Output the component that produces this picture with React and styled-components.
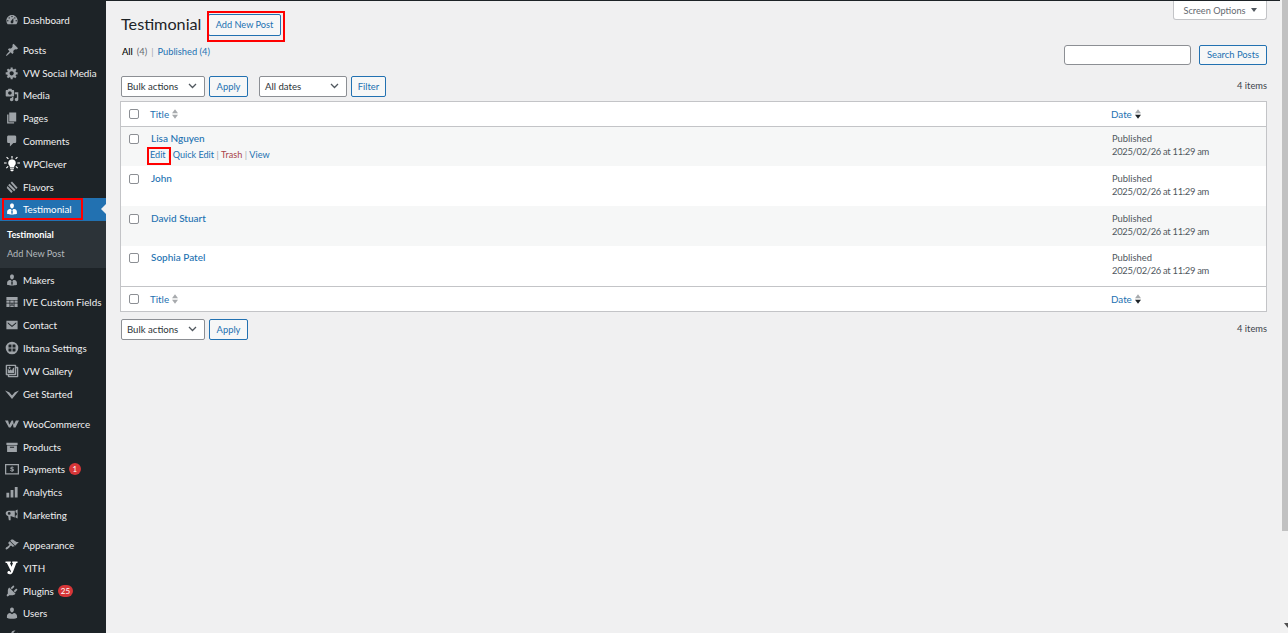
import React from "react";
import styled, { createGlobalStyle } from "styled-components";

const Global = createGlobalStyle`
  html, body { margin: 0; padding: 0; height: 100%; overflow: hidden; background: #f0f0f1; }
  #root { height: 100%; }
  * { box-sizing: border-box; }
  body { font-family: "Lato", "Liberation Sans", sans-serif; font-size: 10px; color: #3c434a; }
`;

const Page = styled.div`
  display: flex; height: 633px; width: 1288px;
`;
const Column = styled.div`
  flex: 1; min-width: 0; display: flex; flex-direction: column;
`;
const TopStrip = styled.div`
  height: 1px; background: #1d2327; flex: none;
`;
const Body = styled.div`
  display: flex; flex: 1; min-height: 0;
`;
const Sidebar = styled.nav`
  width: 106px; flex: none; background: #1d2327; padding-top: 7.2px; overflow: hidden;
  display: flex; flex-direction: column;
`;
const MenuRow = styled.div`
  position: relative; flex: none; height: 22.8px; display: flex; align-items: center;
  padding-left: 3px; gap: 3px; color: ${p => (p.$active ? "#fff" : "#f0f0f1")};
  background: ${p => (p.$active ? "#2271b1" : "transparent")};
  font-size: 9.8px; white-space: nowrap;
`;
const IconSlot = styled.span`
  width: 17px; height: 17px; flex: none; display: flex; align-items: center; justify-content: center;
  color: ${p => (p.$white ? "#fff" : "#9ea3a8")};
  svg { display: block; flex: none; fill: currentColor; }
`;
const Gap = styled.div`
  height: 7.4px; flex: none;
`;
const Arrow = styled.span`
  position: absolute; right: 0; top: 6px; width: 0; height: 0;
  border: 5px solid transparent; border-right-color: #f0f0f1; border-left: 0;
`;
const RedMark = styled.span`
  position: absolute; border: 2px solid #f00; pointer-events: none;
  left: ${p => p.$l}px; top: ${p => p.$t}px; width: ${p => p.$w}px; height: ${p => p.$h}px;
`;
const Badge = styled.span`
  display: inline-flex; align-items: center; justify-content: center; height: 12px; min-width: 12px;
  padding: 0 3px; border-radius: 6px; background: #d63638; color: #fff; font-size: 8px; margin-left: 1px;
`;
const Submenu = styled.div`
  flex: none; height: 47.4px; background: #2c3338; padding: 4px 0 0 7px;
`;
const SubItem = styled.div`
  height: 19px; line-height: 19px; font-size: 9.2px;
  color: ${p => (p.$on ? "#fff" : "#b4b9be")}; font-weight: ${p => (p.$on ? 700 : 400)};
`;
const Main = styled.main`
  flex: 1; min-width: 0; padding: 0 13px 0 14px; display: flex; flex-direction: column;
`;
const Scrollbar = styled.div`
  width: 8px; flex: none; background: #f1f1f1; display: flex; flex-direction: column; align-items: flex-end;
`;
const Thumb = styled.div`
  width: 6px; height: 531px; background: #c1c1c1;
`;
const ScrollArrow = styled.div`
  margin-top: auto; margin-bottom: 5px; width: 0; height: 0;
  border-top: 5px solid #505050; border-left: 4px solid transparent; border-right: 0 solid transparent;
`;
const TopRow = styled.div`
  display: flex; justify-content: space-between; align-items: flex-start; height: 44px;
`;
const TitleGroup = styled.div`
  display: flex; align-items: center; gap: 7px; padding: 13px 0 0 1px;
  position: relative;
`;
const Heading = styled.h1`
  margin: 0 0 3px; font-size: 16.2px; font-weight: 400; color: #1d2327; line-height: 19px; width: 80px; white-space: nowrap;
`;
const OutlineBtn = styled.button`
  font: inherit; font-size: ${p => p.$fs || 9.4}px; height: ${p => p.$h || 21}px; width: ${p => p.$w}px; padding: 0;
  background: #f6f7f7; color: #2271b1; border: 1px solid #2271b1; border-radius: 2px;
  line-height: 1; white-space: nowrap; flex: none;
`;
const ScreenTab = styled.div`
  width: 94px; height: 19px; background: #fff; border: 1px solid #c3c4c7; border-top: 0;
  border-radius: 0 0 3px 3px; display: flex; align-items: center; justify-content: center; gap: 5px;
  font-size: 9.2px; color: #646970;
`;
const Caret = styled.span`
  width: 0; height: 0; border: 3px solid transparent; border-top: 4px solid #50575e; border-bottom: 0;
`;
const SearchRow = styled.div`
  display: flex; justify-content: space-between; align-items: flex-start; height: 20px;
`;
const Views = styled.div`
  display: flex; gap: 4px; font-size: 9.3px; padding: 1px 0 0 2px; line-height: 12px; color: #646970;
`;
const ViewAll = styled.span`
  color: #000; font-weight: 500;
`;
const Sep = styled.span`
  color: #a7aaad;
`;
const LinkText = styled.a`
  color: ${p => (p.$danger ? "#a9444a" : "#2271b1")};
`;
const SearchBox = styled.div`
  display: flex; gap: 8px;
`;
const SearchInput = styled.div`
  width: 127px; height: 20px; background: #fff; border: 1px solid #8c8f94; border-radius: 3px;
`;
const NavRow = styled.div`
  display: flex; align-items: center; height: 21px; margin-top: ${p => p.$mt}px; padding-left: 1px;
`;
const Select = styled.div`
  width: ${p => p.$w}px; height: 21px; background: #fff; border: 1px solid #8c8f94; border-radius: 2px;
  display: flex; align-items: center; justify-content: space-between; padding: 0 7px 1px 5px;
  font-size: 9.6px; color: #2c3338; margin-left: ${p => p.$ml || 0}px;
`;
const Chevron = styled.svg`
  width: 9px; height: 6px; fill: none; stroke: #50575e; stroke-width: 1.3;
`;
const Count = styled.span`
  margin-left: auto; font-size: 9.3px; color: #3c434a;
  position: relative; top: -1px;
`;
const NavBtn = styled(OutlineBtn)`
  margin-left: 4px;
`;
const Table = styled.div`
  margin-top: 4px; background: #fff; border: 1px solid #c3c4c7;
`;
const HeadRow = styled.div`
  display: flex; align-items: center; height: 25px; background: #fff; padding-bottom: 1px;
  ${p => (p.$top ? "border-top: 1px solid #c3c4c7;" : "border-bottom: 1px solid #c3c4c7;")}
`;
const CheckCell = styled.div`
  width: 29px; flex: none; display: flex; justify-content: center; padding-right: 4px;
  align-self: ${p => (p.$pad ? "flex-start" : "center")}; padding-top: ${p => p.$pad || 0}px;
`;
const Check = styled.span`
  display: block; width: 10px; height: 10px; background: #fff; border: 1px solid #8c8f94; border-radius: 2px;
`;
const TitleHead = styled.div`
  flex: 1; display: flex; align-items: center; gap: 3px; font-size: 9.8px; color: #2271b1;
`;
const DateHead = styled(TitleHead)`
  flex: none; width: 155px;
`;
const Sort = styled.svg`
  width: 6px; height: 10px; display: block;
`;
const Row = styled.div`
  display: flex; height: ${p => p.$h}px; background: ${p => (p.$alt ? "#f6f7f7" : "#fff")};
`;
const NameCell = styled.div`
  flex: 1; padding: ${p => p.$pad}px 0 0 1px; position: relative;
`;
const Name = styled(LinkText)`
  display: block; font-size: 10px; line-height: 14px; font-weight: 500;
`;
const Actions = styled.div`
  display: flex; gap: 2.4px; font-size: 9.1px; margin: 3px 0 0 -1px; line-height: 13px; color: #a7aaad;
`;
const DateCell = styled.div`
  flex: none; width: 154px; padding-top: ${p => p.$pad}px; font-size: 9.4px; line-height: 13px; color: #50575e;
`;
const DateLine = styled.div`
  letter-spacing: -0.3px;
`;

const P = ({ d, s = 14, evenodd }) => (
  <svg width={s} height={s} viewBox="0 0 20 20"><path d={d} fillRule={evenodd ? "evenodd" : undefined} /></svg>
);
const paths = {
  dash: "M3.76 16h12.48c1.1-1.37 1.76-3.11 1.76-5 0-4.42-3.58-8-8-8s-8 3.58-8 8c0 1.89.66 3.63 1.76 5zM10 4c.55 0 1 .45 1 1s-.45 1-1 1-1-.45-1-1 .45-1 1-1zM6 6c.55 0 1 .45 1 1s-.45 1-1 1-1-.45-1-1 .45-1 1-1zm8 0c.55 0 1 .45 1 1s-.45 1-1 1-1-.45-1-1 .45-1 1-1zm-5.37 5.55L12 7v6c0 1.1-.9 2-2 2s-2-.9-2-2c0-.57.24-1.08.63-1.45zM4 10c.55 0 1 .45 1 1s-.45 1-1 1-1-.45-1-1 .45-1 1-1zm12 0c.55 0 1 .45 1 1s-.45 1-1 1-1-.45-1-1 .45-1 1-1z",
  post: "M10.44 3.02l1.82-1.82 6.36 6.35-1.83 1.82c-1.05-.68-2.48-.57-3.41.36l-.75.75c-.92.93-1.04 2.35-.35 3.41l-1.83 1.82-2.41-2.41-2.8 2.79c-.42.42-3.38 2.71-3.8 2.29s1.86-3.39 2.28-3.81l2.79-2.79L4.1 9.36l1.83-1.82c1.05.69 2.48.57 3.4-.36l.75-.75c.93-.92 1.05-2.35.36-3.41z",
  gear: "M18 12h-2.18c-.17.7-.44 1.35-.81 1.93l1.54 1.54-2.1 2.1-1.54-1.54c-.58.36-1.23.63-1.91.79V19H8v-2.18c-.68-.16-1.33-.43-1.91-.79l-1.54 1.54-2.12-2.12 1.54-1.54c-.36-.58-.63-1.23-.79-1.91H1V9.03h2.17c.16-.7.44-1.35.8-1.94L2.43 5.55l2.1-2.1 1.54 1.54c.58-.37 1.24-.64 1.93-.81V2h3v2.18c.68.16 1.33.43 1.91.79l1.54-1.54 2.12 2.12-1.54 1.54c.36.59.64 1.24.8 1.94H18V12zm-8.5 1.5c1.66 0 3-1.34 3-3s-1.34-3-3-3-3 1.34-3 3 1.34 3 3 3z",
  media: "M13 11V4c0-.55-.45-1-1-1h-1.67L9 1H5L3.67 3H2c-.55 0-1 .45-1 1v7c0 .55.45 1 1 1h10c.55 0 1-.45 1-1zM7 4.5c1.38 0 2.5 1.12 2.5 2.5S8.38 9.5 7 9.5 4.5 8.38 4.5 7 5.62 4.5 7 4.5zM14 6h5v10.5c0 1.38-1.12 2.5-2.5 2.5S14 17.88 14 16.5s1.12-2.5 2.5-2.5c.17 0 .34.02.5.05V9h-3V6zm-4 8.05V13h2v3.5c0 1.38-1.12 2.5-2.5 2.5S7 17.88 7 16.5 8.12 14 9.5 14c.17 0 .34.02.5.05z",
  page: "M6 15V2h10v13H6zm-1 1h8v2H3V5h2v11z",
  comment: "M5 2h9c1.1 0 2 .9 2 2v7c0 1.1-.9 2-2 2h-2l-5 5v-5H5c-1.1 0-2-.9-2-2V4c0-1.1.9-2 2-2z",
  bulb: "M10 4a4.800 4.800 0 0 0-2.800 8.700V14.500h5.600v-1.800A4.800 4.800 0 0 0 10 4zM7.500 15.200h5v1.100h-5zM8 17h4v1.200l-1 .8H9l-1-.8zM9.300 0h1.400v3H9.300zM2.700 1.900l1-1L6 3.200l-1 1zM16.300.9l1 1-2.300 2.300-1-1zM0 8h3.300v1.400H0zM16.700 8H20v1.400h-3.300zM4.700 12.400l1 1-2.300 2.300-1-1zM15.300 12.400l2.300 2.300-1 1-2.300-2.300z",
  flavor: "M10 2l8 9-2 2-8-9zM6.500 5.500l8.500 8.500-2 2-8.500-8.500zM3.500 8.500l7.500 8-2 2-6.500-7z",
  man: "M7.3 6l-.03-.19c-.04-.37-.05-.73-.03-1.08.02-.36.1-.71.25-1.04.14-.32.31-.61.52-.86s.49-.46.83-.6c.34-.15.72-.23 1.13-.23.69 0 1.26.2 1.71.59s.76.87.91 1.44.18 1.16.09 1.78l-.03.19c-.01.09-.05.25-.11.48-.05.24-.12.47-.2.69-.08.21-.19.45-.34.72-.14.27-.3.49-.47.69-.18.19-.4.34-.67.48-.27.13-.55.19-.86.19s-.59-.06-.87-.19c-.26-.13-.49-.29-.67-.5-.18-.2-.34-.42-.49-.66-.15-.25-.26-.49-.34-.73-.09-.25-.16-.47-.21-.67-.06-.21-.1-.37-.12-.5zm9.2 6.24c.41.7.5 1.41.5 2.14v2.49c0 .03-.12.08-.29.13-.18.04-.42.13-.97.27-.55.12-1.1.24-1.65.34s-1.19.19-1.95.27c-.75.08-1.46.12-2.13.12-.68 0-1.39-.04-2.14-.12-.75-.07-1.4-.17-1.98-.27-.58-.11-1.08-.23-1.56-.34-.49-.11-.8-.21-1.06-.29L3 16.87v-2.49c0-.75.07-1.46.46-2.15s.81-1.25 1.5-1.68C5.66 10.12 7.19 10 8 10l1.67 1.67L9 13v3l1.02 1.08L11 16v-3l-.68-1.33L11.97 10c.77 0 2.2.07 2.9.52.71.45 1.21 1.02 1.63 1.72z",
  fields: "M2 3h16v4H2zM2 8h4.500v3H2zM7.500 8h5v3h-5zM13.500 8H18v3h-4.500zM2 12h4.500v5H2zM7.500 12h2v2h-2zM10.500 12h2v2h-2zM13.500 12H18v5h-4.500zM7.500 15h5v2h-5z",
  mail: "M2 4h16v12H2zM4 6v1.800l6 5 6-5V6l-6 5z",
  ibtana: "M10 1a9 9 0 1 0 0 18 9 9 0 0 0 0-18zM6 5h3.200v4.200H5V6a1 1 0 0 1 1-1zm4.800 0H14a1 1 0 0 1 1 1v3.200h-4.200zM5 10.800h4.200V15H6a1 1 0 0 1-1-1zm5.800 0H15V14a1 1 0 0 1-1 1h-3.200z",
  gallery: "M16 4h1.960c.57 0 1.040.47 1.040 1.040v12.920c0 .57-.47 1.040-1.040 1.040H5.040C4.470 19 4 18.530 4 17.960V16H2.040C1.470 16 1 15.530 1 14.960V2.040C1 1.470 1.470 1 2.040 1h12.920c.57 0 1.040.47 1.040 1.040V4zM3 14h11V3H3v11zm5-8.500C8 4.670 7.330 4 6.500 4S5 4.670 5 5.500 5.670 7 6.500 7 8 6.330 8 5.500zm2 4.500s1-5 3-5v8H4V7c2 0 2 3 2 3s.33-2 2-2 2 2 2 2zm7 7V6h-1v8.960c0 .57-.47 1.040-1.040 1.040H6v1h11z",
  vw: "M0 5l6 2.500 4 4.500 4-4.500L20 5l-10 12z",
  woo: "M0 5h4.500l1.500 6 3.500-6h2l1 6 3-6H20l-5 10h-2.800l-1-5.500-3.200 5.500H5.500z",
  box: "M2 4h16v3H2zM3 8h14v9H3zM7 9.500V11h6V9.500z",
  pay: "M0 3h20v15H0zM1.800 4.800v11.400h16.400V4.800zM10.700 6v1c.8.100 1.400.400 1.800.800l-.7 1c-.4-.4-1-.6-1.600-.6-.5 0-.8.200-.8.500 0 .8 3.300.5 3.300 2.600 0 1-.7 1.700-2 1.900v1H9.400v-1c-1-.100-1.700-.500-2.200-1l.7-1c.5.500 1.200.800 1.900.800.600 0 1-.200 1-.600 0-.9-3.300-.5-3.300-2.600 0-1 .7-1.600 2-1.800V6z",
  bars: "M2 11h4v7H2zM8 7h4v11H8zM14 3h4v15h-4z",
  mega: "M18 2v13l-3-1.500V11c1.100-.2 2-1.200 2-2.500S16.100 6.200 15 6V3.500zM14 4v9.500L8 11.500v6H5.500l-1-6C2.500 11 1 9.500 1 7.500S2.800 4 5 4h3zM6 5.800a2 2 0 1 0 0 4 2 2 0 0 0 0-4z",
  brush: "M14.480 11.060L7.410 3.990l1.500-1.500c.5-.56 2.300-.47 3.510.32 1.210.8 1.430 1.280 2.910 2.100 1.180.64 2.450 1.260 4.450.85zm-.71.71L6.700 4.700 4.930 6.470c-.39.39-.39 1.020 0 1.410l1.060 1.060c.39.39.39 1.030 0 1.420-.6.6-1.430 1.110-2.210 1.690-.35.26-.7.53-1.010.84C1.430 13.230.28 15.100 1.200 16.020c.92.92 2.790-.23 4.130-1.570.31-.31.58-.66.85-1.020.57-.78 1.080-1.610 1.690-2.210.39-.39 1.020-.39 1.410 0l1.060 1.060c.39.39 1.020.39 1.410 0z",
  yith: "M2 2h7v2H8l2 5 2-5h-1V2h7v2h-1.500l-4.500 11.500C11 18 9.500 19 7.500 19 5.500 19 4.500 18 4.500 16.700c0-1.200.9-2 2-2s1.800.8 1.800 1.800c.4-.3.8-.9 1-1.500L3.800 4H2z",
  plug: "M13.110 4.360L9.870 7.600 8 5.730l3.240-3.240c.35-.34 1.050-.2 1.560.32.52.51.66 1.210.31 1.550zm-8 1.770l.91-1.120 9.010 9.010-1.190.84c-.71.71-2.630 1.160-3.820 1.160H6.140L4.900 17.260c-.59.59-1.540.59-2.120 0-.59-.58-.59-1.530 0-2.120l1.240-1.240v-3.880c0-1.130.4-3.190 1.090-3.890zm7.260 3.970l3.240-3.240c.34-.35 1.040-.21 1.550.31.52.51.66 1.210.31 1.550l-3.240 3.250z",
  user: "M10 9.250c-2.270 0-2.730-3.440-2.730-3.440C7 4.020 7.820 2 9.970 2c2.160 0 2.980 2.020 2.710 3.810 0 0-.41 3.440-2.680 3.440zm0 2.570L12.720 10c2.390 0 4.520 2.330 4.520 4.530v2.490s-3.650 1.130-7.240 1.130c-3.650 0-7.240-1.130-7.240-1.130v-2.490c0-2.250 1.940-4.480 4.470-4.480z",
  tools: "M16.680 9.770c-1.340 1.340-3.300 1.670-4.950.99l-5.410 6.520c-.99.99-2.590.99-3.580 0s-.99-2.590 0-3.570l6.520-5.420c-.68-1.650-.35-3.610.99-4.950 1.280-1.280 3.120-1.620 4.720-1.060l-2.890 2.890 2.820 2.820 2.860-2.870c.53 1.580.18 3.400-1.080 4.670z",
};
const iconSize = { bulb: 16, yith: 15 };
const evenodd = { mail: true, pay: true, box: true, ibtana: true, fields: true };

const groups = [
  [["Dashboard", "dash"]],
  [["Posts", "post"], ["VW Social Media", "gear"], ["Media", "media"], ["Pages", "page"], ["Comments", "comment"], ["WPClever", "bulb", true], ["Flavors", "flavor"], ["Testimonial", "man", true, "active"], ["Makers", "man"], ["IVE Custom Fields", "fields"], ["Contact", "mail"], ["Ibtana Settings", "ibtana"], ["VW Gallery", "gallery"], ["Get Started", "vw"]],
  [["WooCommerce", "woo"], ["Products", "box"], ["Payments", "pay", false, null, "1"], ["Analytics", "bars"], ["Marketing", "mega"]],
  [["Appearance", "brush"], ["YITH", "yith", true], ["Plugins", "plug", false, null, "25"], ["Users", "user"], ["Tools", "tools"]],
];

const Menu = () => (
  <Sidebar>
    {groups.map((g, i) => (
      <React.Fragment key={i}>
        {i > 0 && <Gap />}
        {g.map(([label, icon, white, active, badge]) => (
          <React.Fragment key={label}>
            <MenuRow $active={!!active}>
              <IconSlot $white={white || active}>
                <P d={paths[icon]} s={iconSize[icon] || 14} evenodd={evenodd[icon]} />
              </IconSlot>
              <span>{label}</span>
              {badge && <Badge>{badge}</Badge>}
              {active && <Arrow />}
              {active && <RedMark $l={2} $t={0} $w={81} $h={22} />}
            </MenuRow>
            {active && (
              <Submenu>
                <SubItem $on>Testimonial</SubItem>
                <SubItem>Add New Post</SubItem>
              </Submenu>
            )}
          </React.Fragment>
        ))}
      </React.Fragment>
    ))}
  </Sidebar>
);

const SortIcon = ({ active }) => (
  <Sort viewBox="0 0 7 11">
    <path d="M3.500 0L7 4.500H0z" fill="#a7aaad" />
    <path d="M3.500 11L0 6.500h7z" fill={active ? "#1d2327" : "#a7aaad"} />
  </Sort>
);

const Head = ({ top }) => (
  <HeadRow $top={top}>
    <CheckCell><Check /></CheckCell>
    <TitleHead>Title <SortIcon /></TitleHead>
    <DateHead>Date <SortIcon active /></DateHead>
  </HeadRow>
);

const people = [
  { n: "Lisa Nguyen", h: 39, alt: true, actions: true, pad: 4 },
  { n: "John", h: 40, pad: 5 },
  { n: "David Stuart", h: 40, alt: true, pad: 5 },
  { n: "Sophia Patel", h: 40, pad: 4 },
];

const SelectBox = ({ w, ml, children }) => (
  <Select $w={w} $ml={ml}>
    {children}
    <Chevron viewBox="0 0 9 6"><path d="M1 1l3.500 3.500L8 1" /></Chevron>
  </Select>
);

export default function App() {
  return (
    <Page>
      <Global />
      <Column>
        <TopStrip />
        <Body>
          <Menu />
          <Main>
            <TopRow>
              <TitleGroup>
                <Heading>Testimonial</Heading>
                <OutlineBtn $w={73} $h={22} $fs={9.2}>Add New Post</OutlineBtn>
                <RedMark $l={87} $t={10} $w={78} $h={31} />
              </TitleGroup>
              <ScreenTab>Screen Options <Caret /></ScreenTab>
            </TopRow>
            <SearchRow>
              <Views>
                <ViewAll>All</ViewAll> <span>(4)</span> <Sep>|</Sep>
                <LinkText>Published (4)</LinkText>
              </Views>
              <SearchBox>
                <SearchInput />
                <OutlineBtn $h={20} $w={68}>Search Posts</OutlineBtn>
              </SearchBox>
            </SearchRow>
            <NavRow $mt={11}>
              <SelectBox w={84}>Bulk actions</SelectBox>
              <NavBtn $w={39}>Apply</NavBtn>
              <SelectBox w={88} ml={11}>All dates</SelectBox>
              <NavBtn $w={35}>Filter</NavBtn>
              <Count>4 items</Count>
            </NavRow>
            <Table>
              <Head />
              {people.map((p, i) => (
                <Row key={p.n} $h={p.h} $alt={p.alt}>
                  <CheckCell $pad={i === 0 ? 7 : p.pad + 3}><Check /></CheckCell>
                  <NameCell $pad={p.pad}>
                    <Name>{p.n}</Name>
                    {p.actions && (
                      <Actions>
                        <LinkText>Edit</LinkText> <span>|</span>
                        <LinkText>Quick Edit</LinkText> <span>|</span>
                        <LinkText $danger>Trash</LinkText> <span>|</span>
                        <LinkText>View</LinkText>
                        <RedMark $l={-3} $t={20} $w={24} $h={18} />
                      </Actions>
                    )}
                  </NameCell>
                  <DateCell $pad={p.pad + 1}>
                    Published
                    <DateLine>2025/02/26 at 11:29 am</DateLine>
                  </DateCell>
                </Row>
              ))}
              <Head top />
            </Table>
            <NavRow $mt={7}>
              <SelectBox w={84}>Bulk actions</SelectBox>
              <NavBtn $w={39}>Apply</NavBtn>
              <Count>4 items</Count>
            </NavRow>
          </Main>
        </Body>
      </Column>
      <Scrollbar>
        <Thumb />
        <ScrollArrow />
      </Scrollbar>
    </Page>
  );
}
